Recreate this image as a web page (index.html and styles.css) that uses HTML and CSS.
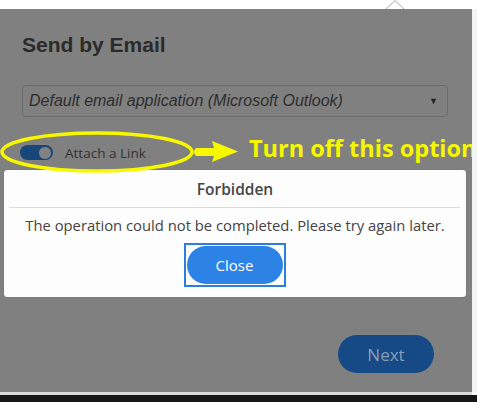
FILE: index.html
```html
<!DOCTYPE html>
<html>
<head>
<meta charset="utf-8">
<link rel="stylesheet" href="styles.css">
</head>
<body>
<div class="topbar">
  <svg class="caret" width="20" height="9" viewBox="0 0 20 9"><path d="M1 9 L10 0.5 L19 9" fill="#ffffff" stroke="#c8c8c8" stroke-width="1.2"/></svg>
</div>
<div class="stage">
  <div class="panel">
    <h1 class="title">Send by Email</h1>
    <div class="select">
      <span class="select-text">Default email application (Microsoft Outlook)</span>
      <span class="select-arrow">▼</span>
    </div>
    <div class="toggle-row">
      <span class="toggle"><span class="knob"></span></span>
      <span class="toggle-label">Attach a Link</span>
    </div>
    <div class="alert">
      <div class="alert-title">Forbidden</div>
      <div class="alert-sep"></div>
      <div class="alert-msg">The operation could not be completed. Please try again later.</div>
      <div class="alert-actions">
        <span class="focus-ring"><button class="close-btn">Close</button></span>
      </div>
    </div>
    <div class="footer">
      <button class="next-btn">Next</button>
    </div>
    <svg class="annot" width="250" height="50" viewBox="0 0 250 50">
      <ellipse cx="97" cy="22" rx="95" ry="19" fill="none" stroke="#f7f700" stroke-width="3.5"/>
      <path d="M196 18 L214 18 L212 11 L238 21.5 L212 32 L214 26 L196 26 Q192 22 196 18 Z" fill="#f7f700"/>
    </svg>
    <div class="annot-text">Turn off this option</div>
  </div>
  <div class="side"></div>
</div>
<div class="bottom-line"></div>
<div class="bottom-bar"></div>
</body>
</html>
```

FILE: styles.css
```css
html, body {
  margin: 0;
  padding: 0;
  background: #ffffff;
  width: 477px;
  height: 402px;
  overflow: hidden;
}
.topbar {
  position: relative;
  height: 9px;
  background: #ffffff;
}
.caret {
  position: absolute;
  left: 385px;
  top: 0;
}
.stage {
  display: flex;
}
.panel {
  position: relative;
  width: 472px;
  height: 383px;
  background: #808080;
  overflow: hidden;
  display: flex;
  flex-direction: column;
}
.side {
  width: 5px;
  background: #f4f4f4;
}
.title {
  margin: 24px 0 0 22px;
  font: bold 21px/24px "Liberation Sans", Arial, sans-serif;
  color: #2a2a2a;
}
.select {
  margin: 28px 24px 0 22px;
  height: 32px;
  box-sizing: border-box;
  border: 1px solid #6b6b6b;
  border-radius: 4px;
  display: flex;
  align-items: center;
  justify-content: space-between;
  padding: 0 9px 0 6px;
  font: italic 16px "Liberation Sans", Arial, sans-serif;
  color: #2e2e2e;
}
.select-arrow {
  font-style: normal;
  font-size: 9px;
  color: #222222;
}
.toggle-row {
  margin-top: 28px;
  height: 15px;
  display: flex;
  align-items: center;
  padding-left: 20px;
}
.toggle {
  position: relative;
  width: 33px;
  height: 15px;
  border-radius: 8px;
  background: #17467a;
  display: flex;
  align-items: center;
  justify-content: flex-end;
  padding-right: 1px;
  box-sizing: border-box;
}
.knob {
  width: 12px;
  height: 12px;
  border-radius: 50%;
  background: #828282;
  border: 1px solid #17467a;
}
.toggle-label {
  margin-left: 12px;
  font: 13.5px "Open Sans", sans-serif;
  color: #333333;
}
.alert {
  margin: 10px 0 0 4px;
  width: 462px;
  height: 127px;
  box-sizing: border-box;
  background: #fdfdfd;
  border-radius: 3px;
  box-shadow: 0 0 1px rgba(0,0,0,0.35);
  display: flex;
  flex-direction: column;
}
.alert-title {
  height: 37px;
  display: flex;
  align-items: center;
  justify-content: center;
  font: 600 15.5px "Open Sans", sans-serif;
  color: #454545;
}
.alert-sep {
  height: 1px;
  margin: 0 6px 0 5px;
  background: #dcdcdc;
}
.alert-msg {
  margin-top: 8px;
  text-align: center;
  font: 14.8px/18px "Open Sans", sans-serif;
  color: #444444;
}
.alert-actions {
  margin-top: 9px;
  display: flex;
  justify-content: center;
}
.focus-ring {
  display: block;
  border: 2px solid #2b7de0;
  padding: 1px;
  margin-left: -1px;
}
.close-btn {
  display: block;
  width: 96px;
  height: 38px;
  border: none;
  border-radius: 19px;
  background: #2d82e5;
  color: #ffffff;
  font: 15px "Open Sans", sans-serif;
  padding: 0;
}
.footer {
  margin-top: 38px;
  display: flex;
  justify-content: flex-end;
  padding-right: 38px;
}
.next-btn {
  width: 96px;
  height: 38px;
  border: none;
  border-radius: 19px;
  background: #154a86;
  color: #8a9fb6;
  font: 17px "Open Sans", sans-serif;
  padding: 0;
}
.annot {
  position: absolute;
  left: 0;
  top: 121px;
}
.annot-text {
  position: absolute;
  left: 249px;
  top: 124px;
  white-space: nowrap;
  font: bold 23.5px/30px "Open Sans", sans-serif;
  color: #f7f700;
}
.bottom-line {
  height: 3px;
  background: #dadada;
  width: 472px;
}
.bottom-bar {
  height: 7px;
  background: #161616;
}
```
